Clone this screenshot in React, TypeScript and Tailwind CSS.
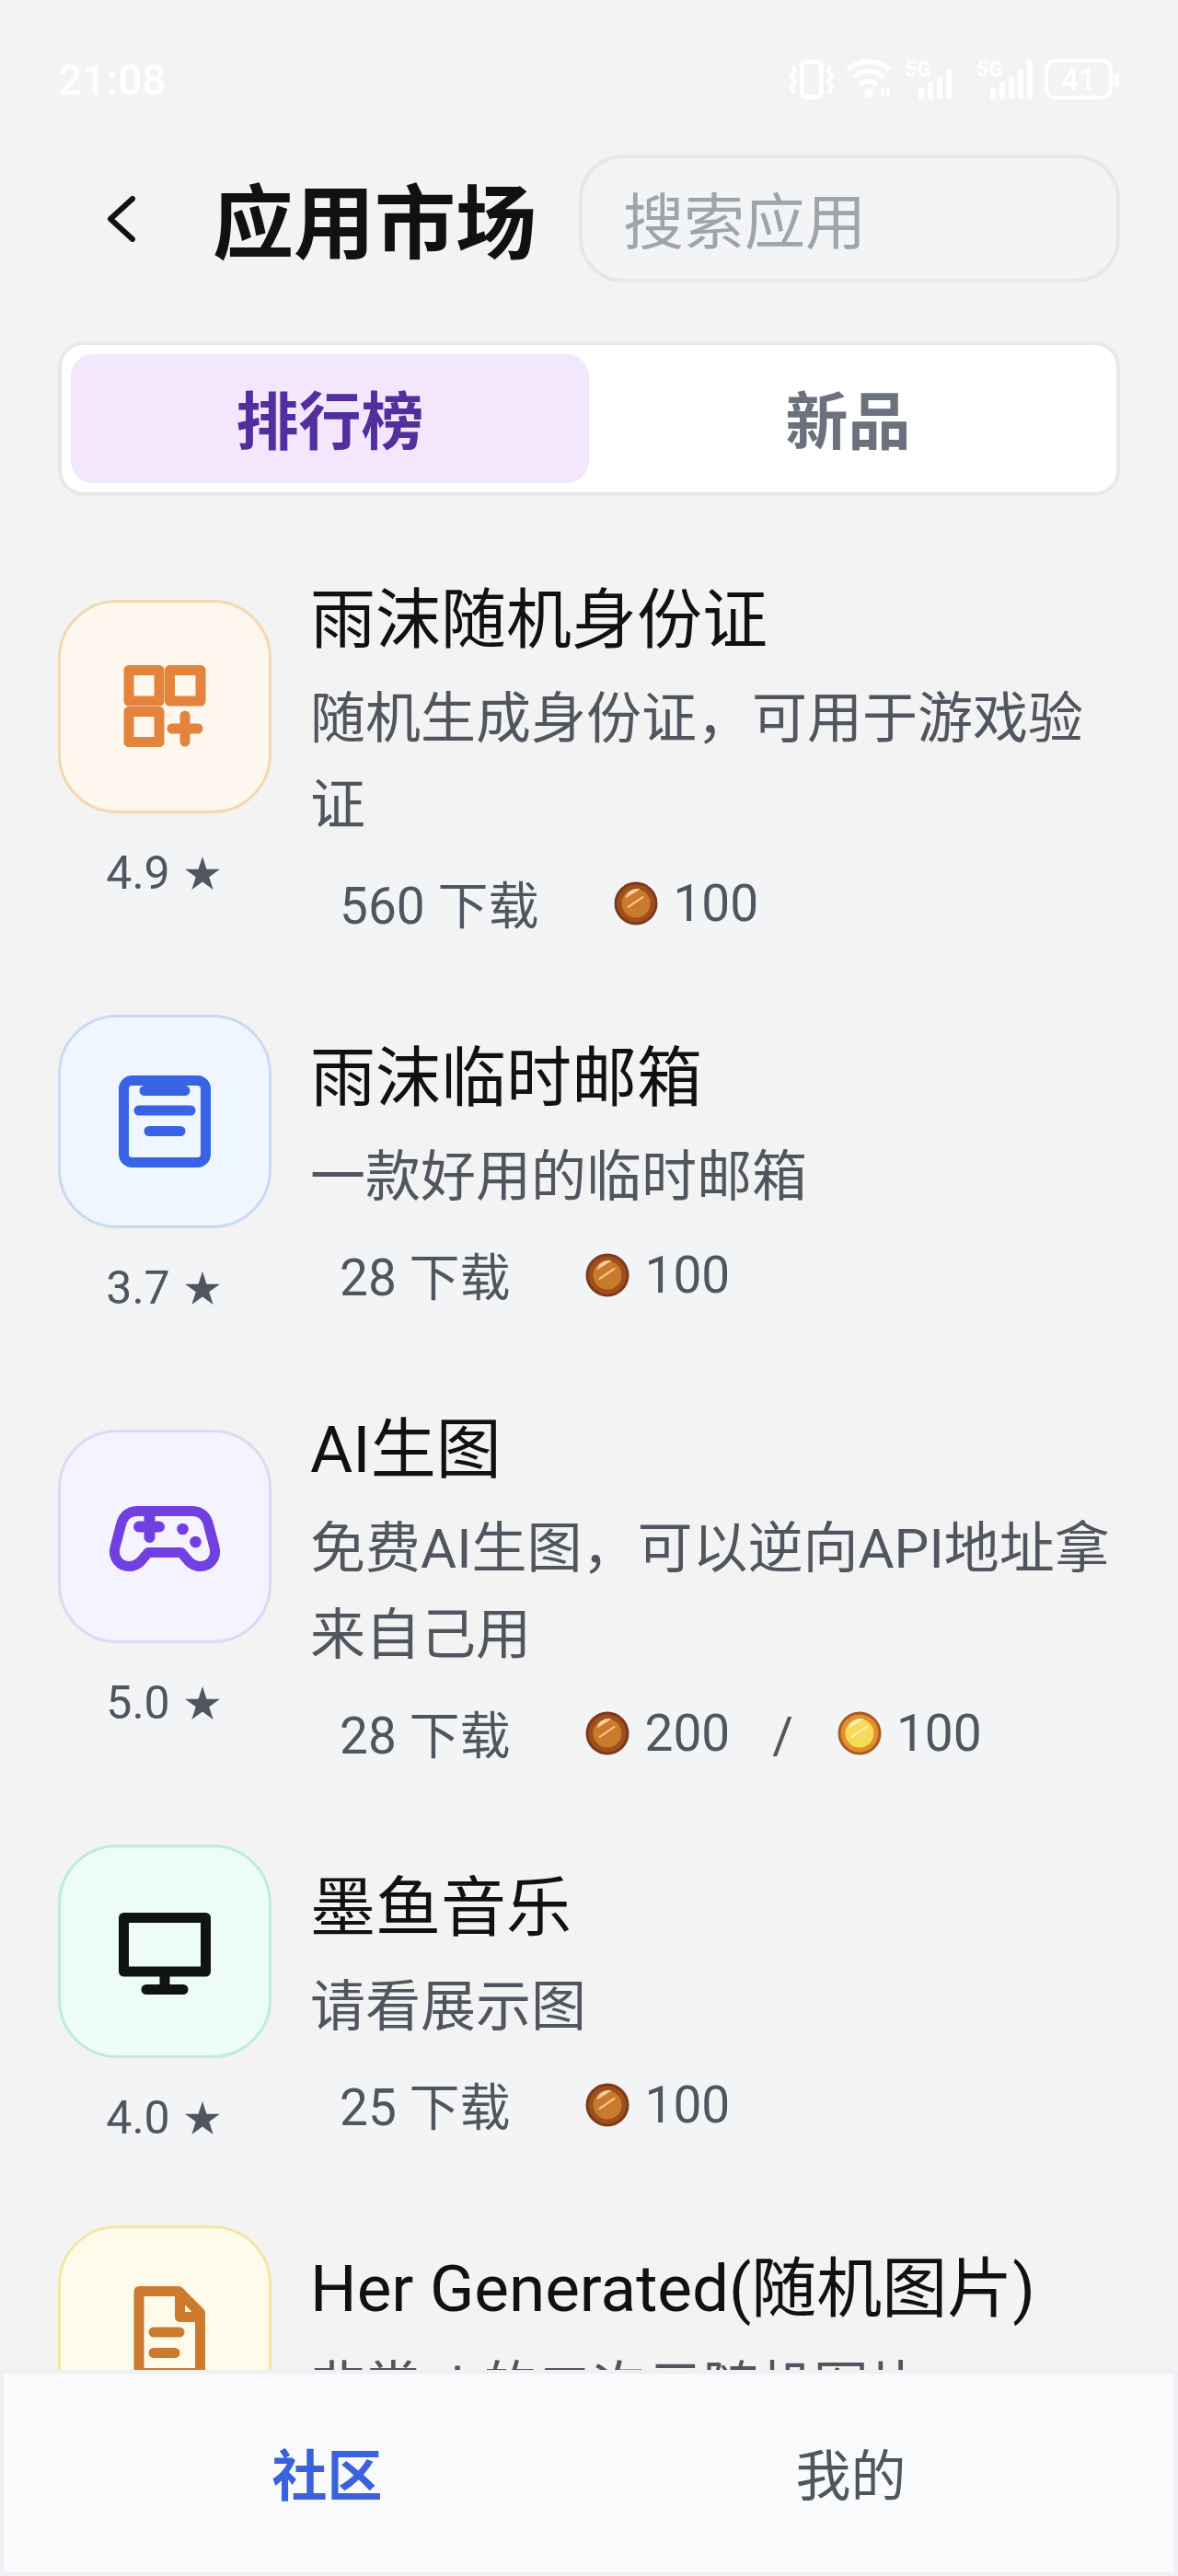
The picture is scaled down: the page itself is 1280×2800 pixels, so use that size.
import type { ReactNode } from "react";

type Price = { coin: "bronze" | "gold"; amount: number };

type MarketApp = {
  name: string;
  desc: string;
  rating: string;
  downloads: number;
  prices: Price[];
  tile: string;
  icon: ReactNode;
};

function TileIcon({ children }: { children: ReactNode }) {
  return (
    <svg
      viewBox="-66 -66 132 132"
      className="size-[132px]"
      fill="none"
      stroke="currentColor"
      strokeWidth="11"
      strokeLinecap="round"
      strokeLinejoin="round"
      aria-hidden="true"
    >
      {children}
    </svg>
  );
}

const apps: MarketApp[] = [
  {
    name: "雨沫随机身份证",
    desc: "随机生成身份证，可用于游戏验证",
    rating: "4.9",
    downloads: 560,
    prices: [{ coin: "bronze", amount: 100 }],
    tile: "bg-[#fef7ed] border-[#f3d8b0] text-[#e4833b]",
    icon: (
      <TileIcon>
        <path d="M-39 -39.5H-6V-6H-39ZM5.5 -39.5H39V-6H5.5ZM-39 5.5H-6V38.5H-39Z" />
        <path d="M8 24H36M22 10V38" />
      </TileIcon>
    ),
  },
  {
    name: "雨沫临时邮箱",
    desc: "一款好用的临时邮箱",
    rating: "3.7",
    downloads: 28,
    prices: [{ coin: "bronze", amount: 100 }],
    tile: "bg-[#eff6ff] border-[#c8daf3] text-[#3763e4]",
    icon: (
      <TileIcon>
        <rect x="-44.5" y="-44.5" width="89" height="89" rx="9" />
        <path d="M-22 -33.5H22M-28 -12H28M-17 10.5H17" />
      </TileIcon>
    ),
  },
  {
    name: "AI生图",
    desc: "免费AI生图，可以逆向API地址拿来自己用",
    rating: "5.0",
    downloads: 28,
    prices: [
      { coin: "bronze", amount: 200 },
      { coin: "gold", amount: 100 },
    ],
    tile: "bg-[#f5f3ff] border-[#dcd8f5] text-[#7140e0]",
    icon: (
      <TileIcon>
        <path d="M-30 -27.5H30C40 -27.5 46 -21 48 -11L54 12C57 24 48 32.5 39 32.5C33 32.5 29 30 26 27L18 17.5H-18L-26 27C-29 30 -33 32.5 -39 32.5C-48 32.5 -57 24 -54 12L-48 -11C-46 -21 -40 -27.5 -30 -27.5Z" />
        <path d="M-28 -10.5H-6M-16.5 -24V1" strokeWidth="12" />
        <g fill="currentColor" stroke="none">
          <circle cx="19.5" cy="-8" r="6.3" />
          <circle cx="33.5" cy="6" r="6.3" />
        </g>
      </TileIcon>
    ),
  },
  {
    name: "墨鱼音乐",
    desc: "请看展示图",
    rating: "4.0",
    downloads: 25,
    prices: [{ coin: "bronze", amount: 100 }],
    tile: "bg-[#edfdf5] border-[#bdecd9] text-[#101411]",
    icon: (
      <TileIcon>
        <path d="M-44.5 -36.5H44.5V22H-44.5ZM0 22V41.5M-20 41.5H20" />
      </TileIcon>
    ),
  },
  {
    name: "Her Generated(随机图片)",
    desc: "非常nb的二次元随机图片",
    rating: "5.0",
    downloads: 12,
    prices: [{ coin: "bronze", amount: 100 }],
    tile: "bg-[#fefbea] border-[#f4e6a2] text-[#cc7b2e]",
    icon: (
      <TileIcon>
        <path d="M-28 -44.5H15L38.5 -21V44.5H-28Z" />
        <path d="M16.5 -43V-16.5H38M-12 0H16M-12 22.5H11" />
      </TileIcon>
    ),
  },
];

const coinColors = {
  bronze: { rim: "#7d3a1b", edge: "#a04f1a", face: "#c97a2d", shine: "#f6cf9c" },
  gold: { rim: "#ab5a1e", edge: "#e48f2c", face: "#f6da58", shine: "#fdf3bd" },
};

function Coin({ kind }: { kind: Price["coin"] }) {
  const c = coinColors[kind];
  return (
    <svg viewBox="0 0 48 48" className="size-12" aria-hidden="true">
      <circle cx="24" cy="24" r="23.5" fill={c.rim} />
      <circle cx="24" cy="24" r="20.5" fill={c.edge} />
      <circle cx="24" cy="24" r="15.5" fill={c.face} />
      <path d="M12.5 18.5C14 11.5 21 6.5 28.5 8.5Z" fill={c.shine} />
      <path d="M15.5 28L31.5 17" stroke={c.shine} strokeWidth="2" strokeLinecap="round" />
    </svg>
  );
}

function PriceChip({ coin, amount }: Price) {
  return (
    <span className="flex h-20 items-center gap-4 rounded-full bg-[#f3f4f6] pr-6 pb-1.5 pl-7">
      <Coin kind={coin} />
      {amount}
    </span>
  );
}

function AppRow({ app }: { app: MarketApp }) {
  return (
    <li className="flex items-center gap-[42px]">
      <div className="flex w-58 shrink-0 flex-col items-center gap-[26px]">
        <div className={`flex size-58 items-center justify-center rounded-[64px] border-3 ${app.tile}`}>
          {app.icon}
        </div>
        <span className="flex h-20 items-center gap-4 rounded-full bg-[#f3f4f6] pr-9 pb-0.5 pl-8 text-[50px] text-[#4f5661]">
          {app.rating}
          <svg viewBox="0 0 40 38" className="size-[38px]" fill="currentColor" role="img" aria-label="星">
            <path d="M20 0L24.7 14.5H40L27.6 23.5L32.3 38L20 29L7.7 38L12.4 23.5L0 14.5H15.3Z" />
          </svg>
        </span>
      </div>
      <div className="min-w-0 flex-1 pb-0.5">
        <h2 className="text-[71px] leading-[118px] text-[#111111]">{app.name}</h2>
        <p className="mt-0.5 text-[60px] leading-[94px] text-[#50565f]">{app.desc}</p>
        <div className="mt-[22px] flex items-center gap-[22px] text-[55px] leading-20 text-[#50565f]">
          <span className="h-20 rounded-full bg-[#f3f4f6] px-8">{app.downloads} 下载</span>
          {app.prices.map((price, i) => (
            <span key={price.coin} className="flex items-center gap-5">
              {i > 0 && <span>/</span>}
              <PriceChip {...price} />
            </span>
          ))}
        </div>
      </div>
    </li>
  );
}

function SignalBars({ full }: { full?: boolean }) {
  return (
    <svg viewBox="0 -6 62 58" className="h-[58px] w-[62px]" fill="#ffffff" aria-hidden="true">
      <text x="0" y="19" fontSize="23" fontWeight="600">
        5G
      </text>
      <rect x="15" y="31" width="6" height="13" rx="2" />
      <rect x="25" y="25" width="6" height="19" rx="2" />
      <rect x="35" y="19" width="6" height="25" rx="2" />
      <rect x="45" y="11" width="6" height="33" rx="2" />
      {full && <rect x="55" y="1" width="6" height="43" rx="2" />}
    </svg>
  );
}

function StatusBar() {
  return (
    <div className="flex h-42 shrink-0 items-center justify-between px-[63px] pt-1.5 text-white">
      <span className="text-[46px] font-semibold">21:08</span>
      <div className="flex items-center gap-3">
        <svg viewBox="0 0 50 46" className="h-[46px] w-[50px]" fill="none" stroke="#ffffff" strokeWidth="5" aria-hidden="true">
          <rect x="14.5" y="3.5" width="21" height="38" rx="4" />
          <path d="M5 8L7 13L3 19L7 25L3 31L6 37M45 8L43 13L47 19L43 25L47 31L44 37" strokeWidth="4" />
        </svg>
        <svg viewBox="0 0 52 46" className="h-[46px] w-[52px]" fill="none" stroke="#ffffff" strokeWidth="5" aria-hidden="true">
          <path d="M2 12C15 0 35 0 48 12M9 20C18 11 32 11 41 20M16 28C21 23 29 23 34 28" />
          <circle cx="25" cy="37" r="5" fill="#ffffff" stroke="none" />
          <path d="M40 32V41M46 32V41" strokeWidth="4" />
        </svg>
        <SignalBars />
        <div className="ml-1">
          <SignalBars full />
        </div>
        <svg viewBox="0 0 82 46" className="h-[46px] w-[82px]" fill="#ffffff" aria-hidden="true">
          <rect x="2" y="2" width="70" height="40" rx="10" fill="none" stroke="#ffffff" strokeWidth="4" />
          <rect x="76" y="16" width="5" height="14" rx="2" />
          <text x="37" y="34" fontSize="33" fontWeight="600" textAnchor="middle">
            41
          </text>
        </svg>
      </div>
    </div>
  );
}

export default function App() {
  return (
    <div className="flex h-screen flex-col bg-[#f3f3f3] font-['Roboto','Noto_Sans_CJK_SC',sans-serif]">
      <StatusBar />
      <header className="flex shrink-0 items-center px-[63px]">
        <button type="button" aria-label="返回" className="mr-[30px] flex h-[139px] w-[138px] shrink-0 items-center justify-center">
          <svg
            viewBox="0 0 30 50"
            className="h-[50px] w-[30px]"
            fill="none"
            stroke="#111111"
            strokeWidth="6"
            strokeLinecap="round"
            strokeLinejoin="round"
            aria-hidden="true"
          >
            <path d="M27 3L3 25L27 47" />
          </svg>
        </button>
        <h1 className="shrink-0 pt-3 text-[88px] leading-[127px] font-bold text-[#111111]">应用市场</h1>
        <input
          type="search"
          aria-label="搜索应用"
          placeholder="搜索应用"
          className="ml-[46px] h-[139px] min-w-0 flex-1 rounded-[48px] border-4 border-[#e6e7e9] bg-[#f3f4f6] pt-2.5 pr-6 pl-11 text-[66px] text-[#111111] placeholder:text-[#9fa3ac]"
        />
      </header>

      <div className="mx-[63px] mt-16 flex shrink-0 rounded-[28px] border-4 border-[#e8e8e9] bg-white p-[10px]">
        <button type="button" className="h-35 flex-1 rounded-3xl bg-[#f2e7fd] pt-2.5 text-[68px] font-bold text-[#532e9f]">
          排行榜
        </button>
        <button type="button" className="h-35 flex-1 rounded-3xl pt-2.5 text-[68px] font-bold text-[#6c717e]">
          新品
        </button>
      </div>

      <main className="min-h-0 flex-1 overflow-y-auto px-[63px] pt-[76px] [scrollbar-width:none]">
        <ul className="flex flex-col gap-[76px] pb-[76px]">
          {apps.map((app) => (
            <AppRow key={app.name} app={app} />
          ))}
        </ul>
      </main>

      <nav className="flex h-56 shrink-0 items-center border-4 border-[#f0f0f4] bg-[#f8fafc] px-[67px] text-[60px]">
        <a href="#community" className="flex-1 pt-2.5 text-center font-bold text-[#3a62dc]">
          社区
        </a>
        <a href="#mine" className="flex-1 pt-2.5 text-center text-[#50565f]">
          我的
        </a>
      </nav>
    </div>
  );
}
